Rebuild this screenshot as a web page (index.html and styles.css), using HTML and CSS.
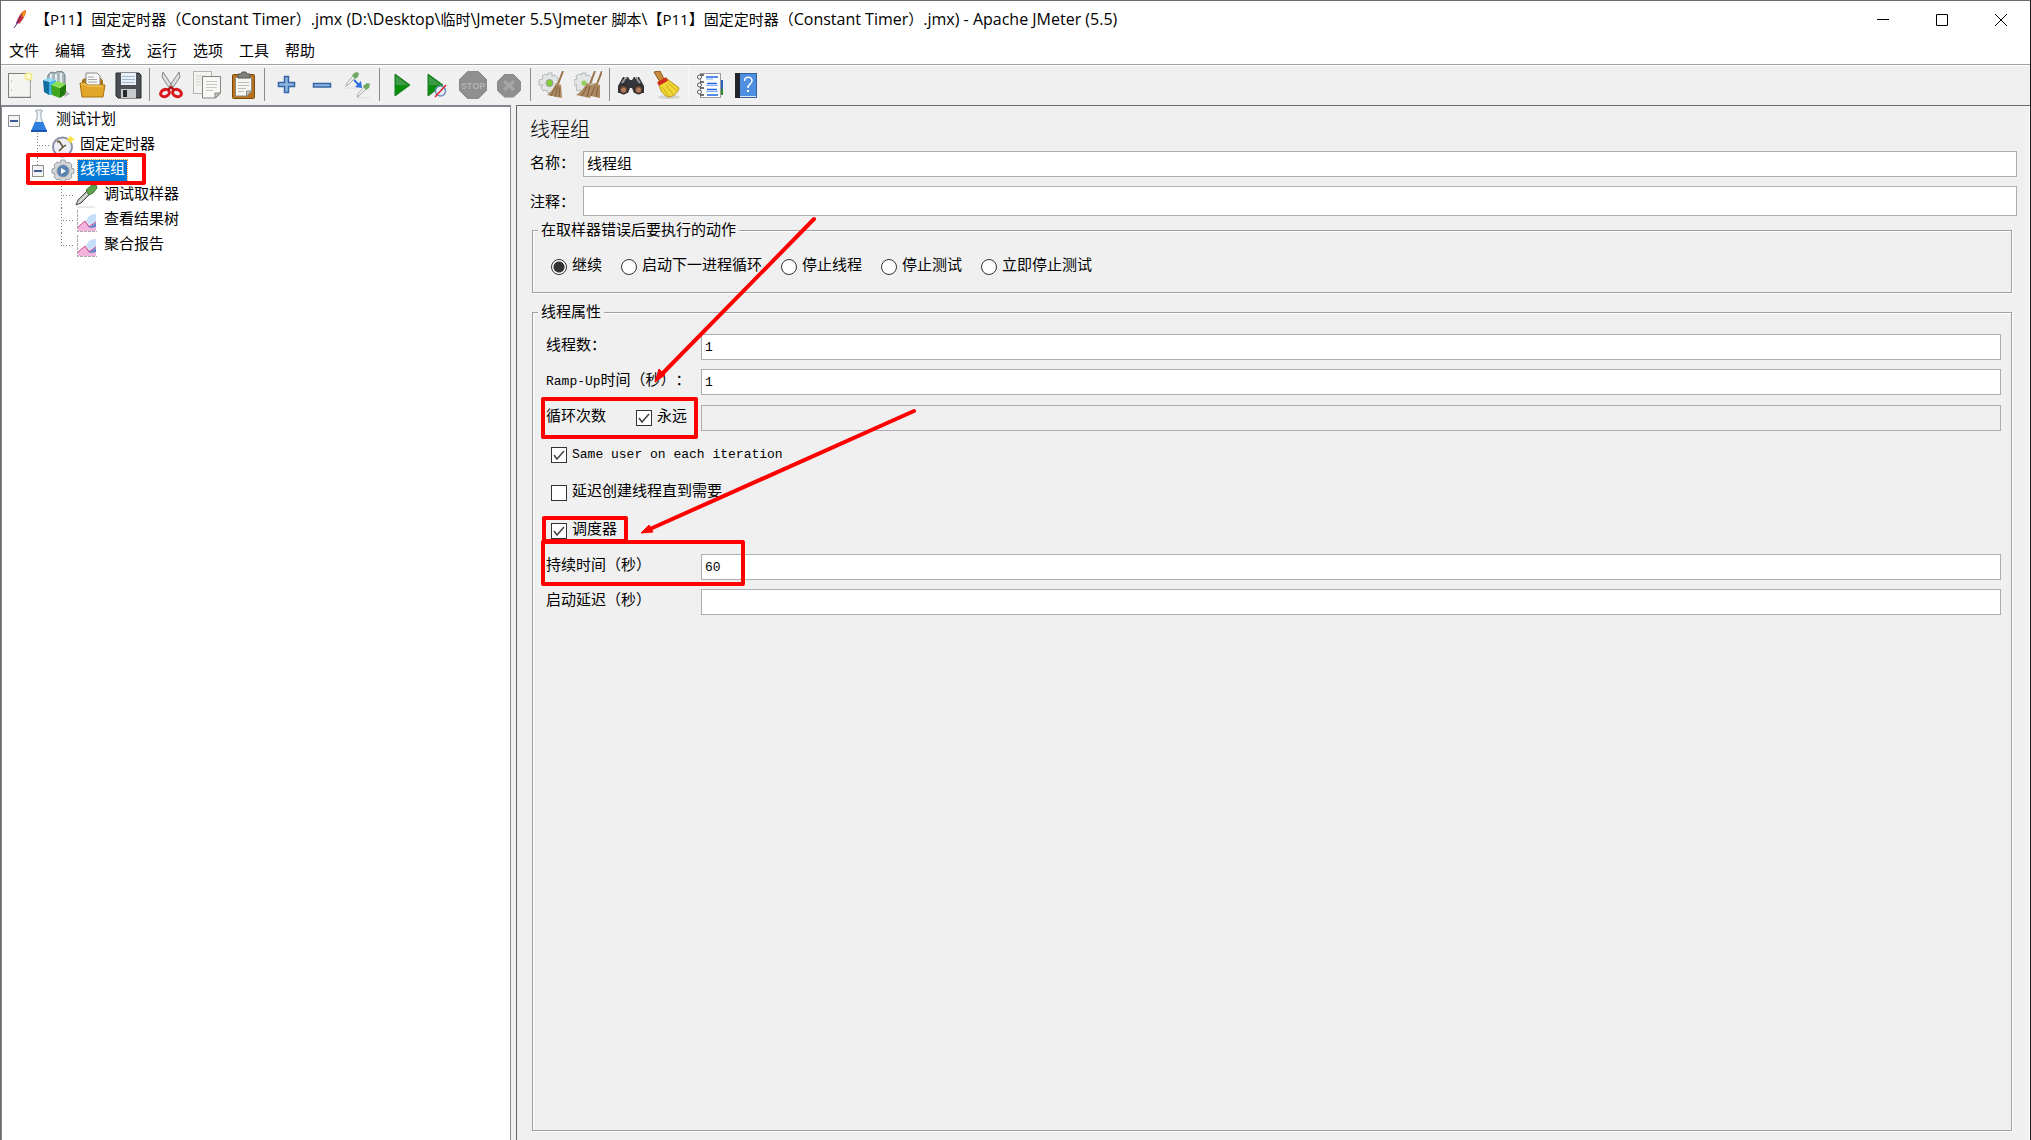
FILE: index.html
```html
<!DOCTYPE html>
<html lang="zh-CN">
<head>
<meta charset="utf-8">
<title>Apache JMeter (5.5)</title>
<link rel="stylesheet" href="styles.css">
</head>
<body>
<div class="window">
  <header class="titlebar">
    <svg class="app-icon" viewBox="0 0 14 20" aria-hidden="true">
      <path d="M13 1C9 2 6 6 4 12l2 3c4-4 6-8 7-14z" fill="#d22b3a"/>
      <path d="M13 1C10 2 8 4 7 7l4 1c1-2 2-4 2-7z" fill="#f28a1c"/>
      <path d="M4 11l-1 4 3-1z" fill="#8c2a86"/>
      <path d="M1 19l4-6M9 5l-5 9" stroke="#5b2a6e" stroke-width="1" fill="none"/>
    </svg>
    <h1 class="title">【P11】固定定时器（<span>Constant Timer</span>）<span>.jmx (D:\Desktop\</span>临时<span>\Jmeter 5.5\Jmeter </span>脚本<span>\</span>【P11】固定定时器（<span>Constant Timer</span>）<span>.jmx) - Apache JMeter (5.5)</span></h1>
    <div class="window-controls">
      <button type="button" aria-label="最小化"><svg viewBox="0 0 12 12"><path d="M0 5.500h12" stroke="#000" fill="none"/></svg></button>
      <button type="button" aria-label="最大化"><svg viewBox="0 0 12 12"><path d="M.5.5h11v11H.5z" stroke="#000" fill="none"/></svg></button>
      <button type="button" aria-label="关闭"><svg viewBox="0 0 12 12"><path d="M0 0l12 12M12 0L0 12" stroke="#000" fill="none"/></svg></button>
    </div>
  </header>

  <nav class="menubar">
    <button type="button">文件</button>
    <button type="button">编辑</button>
    <button type="button">查找</button>
    <button type="button">运行</button>
    <button type="button">选项</button>
    <button type="button">工具</button>
    <button type="button">帮助</button>
  </nav>

  <div class="toolbar" role="toolbar">
    <button type="button" aria-label="新建"><svg viewBox="0 0 28 28">
      <rect x="2.500" y="2.500" width="22" height="24" fill="#f4f4f3" stroke="#7e7e78"/>
      <path d="M4 25.500h20v-15" stroke="#d8d8d4" fill="none"/><path d="M5.500 9v2M5.500 18v2" stroke="#c4c4c0"/>
      <circle cx="22.500" cy="5.500" r="4" fill="#f3ea8c"/><circle cx="22.500" cy="5.500" r="2.200" fill="#fffde0"/>
    </svg></button>
    <button type="button" aria-label="模板"><svg viewBox="0 0 28 28">
      <path d="M6 4l3-3 4 1 3-2 5 1 2 3v10H5z" fill="#a9b6bb" stroke="#6d7f86"/>
      <path d="M9 3v9M14 3v9M19 2v10" stroke="#e6edf0" stroke-width="2"/>
      <path d="M1 9l6 2v13l-5-3z" fill="#0f6f9f"/><path d="M7 11l7-2v14l-7 1z" fill="#3fb4e4"/><path d="M1 9l6-2 7 2-7 2z" fill="#8ed6f3"/>
      <path d="M9 14l9 3v10l-8-3z" fill="#3ea51c"/><path d="M18 17l6-4v10l-6 4z" fill="#1f7a0c"/><path d="M9 14l6-4 9 3-6 4z" fill="#8be055"/>
      <path d="M24 20l4 3-6 3z" fill="#b5b5b5"/>
    </svg></button>
    <button type="button" aria-label="打开"><svg viewBox="0 0 28 28">
      <path d="M4 9l3-2h16l2 3v14H4z" fill="#a87410"/>
      <path d="M8 2h11l3 3v11H8z" fill="#f7f7f7" stroke="#8a8a8a"/><path d="M10 6h6M10 8.500h9M10 11h9" stroke="#a5a5a5"/>
      <path d="M2 12h6l2 2h17l-2 12H4z" fill="#e2a62a" stroke="#a8740f"/><path d="M3 13h5l2 2h15" stroke="#f8d878" fill="none"/>
    </svg></button>
    <button type="button" aria-label="保存"><svg viewBox="0 0 28 28">
      <path d="M2 2h23l2 2v23H4l-2-2z" fill="#4b4e53" stroke="#26282b"/>
      <rect x="7" y="2" width="15" height="12" fill="#e8eff6"/><path d="M8 5.500h13M8 8.500h13M8 11.500h13" stroke="#9db8cf"/>
      <rect x="7" y="18" width="15" height="9" fill="#c7c9cb"/><rect x="9" y="19" width="4" height="7" fill="#26282b"/>
    </svg></button>
    <span class="separator"></span>
    <button type="button" aria-label="剪切"><svg viewBox="0 0 28 28">
      <path d="M6 1l-1 5 8 12 3-2zM22 1l1 5-8 12-3-2z" fill="#dcdedf" stroke="#85888a"/>
      <ellipse cx="8" cy="22" rx="4.500" ry="3.500" fill="none" stroke="#d8161c" stroke-width="3" transform="rotate(-25 8 22)"/>
      <ellipse cx="20" cy="22" rx="4.500" ry="3.500" fill="none" stroke="#d8161c" stroke-width="3" transform="rotate(25 20 22)"/>
      <path d="M11 19l3-3 3 3" stroke="#b50d12" stroke-width="2" fill="none"/>
    </svg></button>
    <button type="button" aria-label="复制"><svg viewBox="0 0 28 28">
      <rect x=".5" y=".5" width="18" height="22" fill="#f3f3f2" stroke="#b4b4b0"/><path d="M3 5h10M3 8h5M3 11h5M3 14h5" stroke="#d0d0cc"/>
      <path d="M9.500 5.500h18V22l-5 5h-13z" fill="#f8f8f7" stroke="#858580"/><path d="M22 27v-5h5.500z" fill="#c5c5c0" stroke="#858580"/>
      <path d="M13 10.500h11M13 13.500h11M13 16.500h11M13 19.500h7" stroke="#c4c4c0"/>
    </svg></button>
    <button type="button" aria-label="粘贴"><svg viewBox="0 0 28 28">
      <rect x="3.500" y="3.500" width="22" height="24" rx="1" fill="#b8741c" stroke="#7d4a0a"/>
      <path d="M6.500 6.500h16V20l-5 5h-11z" fill="#f6f6f5" stroke="#8a8a86"/><path d="M17.500 25v-5h5z" fill="#c9c9c5" stroke="#8a8a86"/>
      <path d="M9 11.500h11M9 14.500h11M9 17.500h8M9 20.500h6" stroke="#bcbcb8"/>
      <path d="M9 3h3l1-2h4l1 2h3v4H9z" fill="#7e807c" stroke="#54564f"/>
    </svg></button>
    <span class="separator"></span>
    <button type="button" aria-label="展开"><svg viewBox="0 0 28 28">
      <path d="M12.500 5.500h4v6h6v4h-6v6h-4v-6h-6v-4h6z" fill="#8db6e2" stroke="#3465a4" stroke-width="1.500"/>
    </svg></button>
    <button type="button" aria-label="折叠"><svg viewBox="0 0 28 28"><rect x="5.500" y="12.500" width="17" height="3.500" fill="#8db6e2" stroke="#3465a4" stroke-width="1.500"/></svg></button>
    <button type="button" aria-label="切换"><svg viewBox="0 0 28 28">
      <path d="M2 15l1-3 6-7 2 2-7 7z" fill="#f2f4f2" stroke="#a5aaa5"/><path d="M8 4l4-3 3 1-1 4-3 2z" fill="#6fa860"/>
      <path d="M0 17h14M13 27h13" stroke="#dddddd"/>
      <path d="M13 26l1-3 6-7 2 2-7 7z" fill="#f2f4f2" stroke="#a5aaa5"/><path d="M19 15l4-3 3 1-1 4-3 2z" fill="#6fa860"/>
      <path d="M10 9l5 5" stroke="#2d6fe0" stroke-width="2"/><path d="M18 17l-7-1 6-6z" fill="#2d6fe0"/>
    </svg></button>
    <span class="separator"></span>
    <button type="button" aria-label="启动"><svg viewBox="0 0 28 28"><path d="M8 3l15 11L8 25z" fill="#0a8f0a" stroke="#1c7a2a"/><path d="M9 5l12 9H9z" fill="#3f9a4a"/></svg></button>
    <button type="button" aria-label="不停顿开始"><svg viewBox="0 0 28 28"><path d="M5 3l15 11L5 25z" fill="#0a8f0a" stroke="#1c7a2a"/><path d="M6 5l12 9H6z" fill="#3f9a4a"/>
      <circle cx="17.500" cy="20" r="5" fill="#e8eef7" stroke="#6f8fc0" stroke-width="1.500"/><path d="M12 26l11-12" stroke="#d8232a" stroke-width="1.500"/>
    </svg></button>
    <button type="button" aria-label="停止" disabled><svg viewBox="0 0 28 28"><path d="M8.500.5h11l8 8v11l-8 8h-11l-8-8v-11z" fill="#8f8f8f" stroke="#8a8a8a"/>
      <text x="14" y="18" text-anchor="middle" class="stop-text">STOP</text></svg></button>
    <button type="button" aria-label="关闭线程" disabled><svg viewBox="0 0 28 28"><path d="M9.500 3.500h9l7 7v9l-7 6.500h-9l-7-6.500v-9z" fill="#8f8f8f" stroke="#8a8a8a"/><path d="M9 10l10 9M19 10L9 19" stroke="#a6a6a6" stroke-width="3.500"/></svg></button>
    <span class="separator"></span>
    <button type="button" aria-label="清除"><svg viewBox="0 0 28 28">
      <path d="M10 2h4v3l3-1 3 3v11l-5 1-1 3h-4l-1-3-4 1-2-4 2-2H1v-5l4-1-1-3 3-2 3 1z" fill="#e2e4e5" stroke="#b5b8ba"/>
      <circle cx="11.500" cy="12" r="3.500" fill="#7fcf35" stroke="#9a9c9a"/>
      <path d="M25 0l-5 13" stroke="#9a7448" stroke-width="2"/><path d="M18 12l5 2 1 13-15-3c4-3 7-7 9-12z" fill="#ac8961"/>
      <path d="M18 15l-5 10M20 15l-3 11M22 16l-1 10" stroke="#7f603d"/>
    </svg></button>
    <button type="button" aria-label="清除全部"><svg viewBox="0 0 28 28">
      <path d="M8 2h4v3l3-1 3 3v11l-5 1-1 3H8l-1-3-4 1-1-4 1-2H0v-5l3-1-1-3 3-2 3 1z" fill="#e2e4e5" stroke="#b5b8ba"/>
      <circle cx="10" cy="12" r="2.500" fill="#8fce55"/>
      <path d="M21 0l-5 13M28 0l-5 13" stroke="#9a7448" stroke-width="2"/><path d="M13 12l4 2 4-2 5 2v13l-9-2-1 2-14-3c5-3 8-7 11-12z" fill="#ac8961"/>
      <path d="M13 15L8 25M16 15l-3 11M21 15l-4 10M24 16l-2 10" stroke="#7f603d"/>
    </svg></button>
    <span class="separator"></span>
    <button type="button" aria-label="查找"><svg viewBox="0 0 28 28">
      <path d="M6 6h5l2 3h2l2-3h5l5 9v7H17l-2-5h-2l-2 5H1v-7z" fill="#33363a"/>
      <path d="M7 7h3M18 7h3M5 12l3-4M20 8l3 4" stroke="#9a9da0" stroke-width="2"/>
      <circle cx="6.500" cy="18.500" r="4.500" fill="#5b4436" stroke="#222"/><circle cx="21.500" cy="18.500" r="4.500" fill="#5b4436" stroke="#222"/>
      <circle cx="6.500" cy="19" r="2.500" fill="#b27a56"/><circle cx="21.500" cy="19" r="2.500" fill="#b27a56"/>
    </svg></button>
    <button type="button" aria-label="重置查找"><svg viewBox="0 0 28 28">
      <ellipse cx="16" cy="26" rx="11" ry="2" fill="#d3d3d0"/>
      <path d="M1 1l6-1 4 8-4 3z" fill="#c88a3c" stroke="#8a5a1c"/>
      <path d="M6 11l7-4 13 10c-1 5-6 9-11 9-6-3-9-8-9-15z" fill="#f1d636" stroke="#b8940f"/>
      <path d="M9 16l7 9M13 14l7 9M15 12l9 8" stroke="#cda91c" fill="none"/><path d="M5 13l9-5" stroke="#d22a1c" stroke-width="4"/>
    </svg></button>
    <span class="separator separator-faint"></span>
    <button type="button" aria-label="函数助手"><svg viewBox="0 0 28 28">
      <path d="M24 9h3v9h-3z" fill="#2a63c4"/><path d="M24 18h3v6h-3z" fill="#2f8a2a"/>
      <rect x="4.500" y="2.500" width="20" height="24" fill="#fff" stroke="#9a9a98"/>
      <path d="M10 6h12M11 12.500h10M11 18.500h10M11 24h11" stroke="#1f66e0" stroke-width="1.500"/><path d="M10 8h7M10 14.500h12M10 20.500h12" stroke="#7db0f4"/>
      <path d="M4 4h4M4 11h4M4 17h4M4 24h4" stroke="#444" stroke-width="1.500"/>
      <g fill="#fff" stroke="#555"><circle cx="3.500" cy="6" r="2"/><circle cx="3.500" cy="14" r="2"/><circle cx="3.500" cy="21" r="2"/></g>
    </svg></button>
    <button type="button" aria-label="帮助"><svg viewBox="0 0 28 28">
      <rect x="3.500" y="2.500" width="21" height="24" fill="#4f8fe0" stroke="#355f9c"/><rect x="3" y="2" width="5" height="25" fill="#22262c"/>
      <path d="M8 25.500h16" stroke="#dfe7f2"/>
      <path d="M12.500 10c0-5 8-5 7.500 0-.5 3-4 3-4 7" fill="none" stroke="#fff" stroke-width="1.500"/><rect x="15" y="19" width="2" height="2" fill="#fff"/>
    </svg></button>
  </div>

  <div class="workspace">
    <aside class="tree-pane">
      <ul class="tree">
        <li>
          <div class="node"><button type="button" class="toggle" aria-label="收起 测试计划"></button>
            <svg viewBox="0 0 24 24"><path d="M9 1h6v2h-1v6l5 12H5l5-12V3H9z" fill="#e4ebf0" stroke="#a3adb5"/><path d="M8 13h8l4 9H4z" fill="#2f7fe0"/><path d="M4 21h16v2H4z" fill="#1b55ad"/><path d="M12 4v8" stroke="#fff"/></svg>
            <span class="node-label">测试计划</span></div>
          <ul>
            <li>
              <div class="node"><span class="stub"></span>
                <svg viewBox="0 0 24 24"><circle cx="11.500" cy="13" r="9.500" fill="#eef0f6" stroke="#8d90a8" stroke-width="2"/><path d="M8 7l4 6 3-2M8 7l-2 1M12 13l-4 4" stroke="#5c5030" stroke-width="1.500" fill="none"/><path d="M19 1l2 3 3 1-3 2-1 3-2-3-3-1 3-2z" fill="#f5e33a"/></svg>
                <span class="node-label">固定定时器</span></div>
            </li>
            <li>
              <div class="node"><button type="button" class="toggle" aria-label="收起 线程组"></button>
                <svg viewBox="0 0 24 24"><path d="M10 1h4l1 3 3-1 3 3-1 3 3 1v4l-3 1 1 3-3 3-3-1-1 3h-4l-1-3-3 1-3-3 1-3-3-1v-4l3-1-1-3 3-3 3 1z" fill="#d4d7da" stroke="#9b9fa4"/><circle cx="12" cy="12" r="6" fill="#5a83b4" stroke="#8d98a4"/><path d="M10 9l5 3-5 3z" fill="#fff"/></svg>
                <span class="node-label selected">线程组</span></div>
              <ul>
                <li><div class="node"><span class="stub"></span>
                  <svg viewBox="0 0 24 24"><path d="M1 21l2-5 9-9 3 3-9 9z" fill="#b9bdb9" stroke="#4b504b"/><path d="M3 19l9-9" stroke="#f4f4f4"/><path d="M11 6l3 5 4-2 4-5-1-3h-4z" fill="#5fa04c" stroke="#3f7a30"/><path d="M2 23h18" stroke="#d4d4d4"/></svg>
                  <span class="node-label">调试取样器</span></div></li>
                <li><div class="node"><span class="stub"></span>
                  <svg viewBox="0 0 24 24"><path d="M3 22v-4l7-6 4 4 4-2h3v8z" fill="#f2b3dc"/><path d="M11 12c2-5 5-7 10-7v9c-4 3-7 2-10-2z" fill="#c6def8"/><path d="M3 18l7-6 4 6 7-5" stroke="#c84a88" fill="none"/><path d="M12 14l3 4 6-4v4l-6 1z" fill="#5d86c8"/><path d="M2.500 1v21.500H22" stroke="#a6a6a6" stroke-dasharray="3 1" fill="none"/></svg>
                  <span class="node-label">查看结果树</span></div></li>
                <li><div class="node"><span class="stub"></span>
                  <svg viewBox="0 0 24 24"><path d="M3 22v-4l7-6 4 4 4-2h3v8z" fill="#f2b3dc"/><path d="M11 12c2-5 5-7 10-7v9c-4 3-7 2-10-2z" fill="#c6def8"/><path d="M3 18l7-6 4 6 7-5" stroke="#c84a88" fill="none"/><path d="M12 14l3 4 6-4v4l-6 1z" fill="#5d86c8"/><path d="M2.500 1v21.500H22" stroke="#a6a6a6" stroke-dasharray="3 1" fill="none"/></svg>
                  <span class="node-label">聚合报告</span></div></li>
              </ul>
            </li>
          </ul>
        </li>
      </ul>
    </aside>

    <main class="editor">
      <h2>线程组</h2>
      <div class="field name-row"><label for="name">名称：</label><input type="text" id="name" value="线程组"></div>
      <div class="field comment-row"><label for="comment">注释：</label><input type="text" id="comment"></div>

      <fieldset class="error-action">
        <legend>在取样器错误后要执行的动作</legend>
        <div class="radios">
          <label><input type="radio" name="action" checked>继续</label>
          <label><input type="radio" name="action">启动下一进程循环</label>
          <label><input type="radio" name="action">停止线程</label>
          <label><input type="radio" name="action">停止测试</label>
          <label><input type="radio" name="action">立即停止测试</label>
        </div>
      </fieldset>

      <fieldset class="properties">
        <legend>线程属性</legend>
        <div class="rows">
          <div class="prop"><label for="threads">线程数：</label><input type="text" id="threads" value="1"></div>
          <div class="prop"><label for="ramp"><span class="latin">Ramp-Up</span>时间（秒）：</label><input type="text" id="ramp" value="1"></div>
          <div class="prop"><div class="loop"><label for="loops">循环次数</label><label><input type="checkbox" checked>永远</label></div><input type="text" id="loops" disabled></div>
        </div>
        <div class="checks">
          <label><input type="checkbox" checked><span class="latin">Same user on each iteration</span></label>
          <label><input type="checkbox">延迟创建线程直到需要</label>
          <label><input type="checkbox" checked>调度器</label>
        </div>
        <div class="rows">
          <div class="prop"><label for="duration">持续时间（秒）</label><input type="text" id="duration" value="60"></div>
          <div class="prop"><label for="delay">启动延迟（秒）</label><input type="text" id="delay"></div>
        </div>
      </fieldset>
    </main>
  </div>

  <svg class="annotations" aria-hidden="true">
    <g fill="none" stroke="#fe0000" stroke-width="4" stroke-linejoin="round" stroke-linecap="round">
      <rect x="28" y="155" width="116" height="28"/>
      <rect x="543" y="399" width="153" height="38"/>
      <rect x="544" y="518" width="82" height="23"/>
      <rect x="543" y="542" width="200" height="42"/>
      <path d="M814 219L662 374M914 411L650 529"/>
    </g>
    <path d="M655 382l4-13 6 6zM641 533l8-8 4 7z" fill="#fe0000" stroke="#fe0000" stroke-linejoin="round"/>
  </svg>
</div>
</body>
</html>
```
FILE: styles.css
```css
* {
  box-sizing: border-box;
}

body {
  margin: 0;
  background: #f0f0f0;
  color: #000;
  font: 15px/20px "Liberation Mono", "Noto Sans CJK SC", monospace;
  text-spacing-trim: space-all;
}

button {
  padding: 0;
  border: 0;
  background: none;
  color: inherit;
  font: inherit;
}

.window {
  position: relative;
  display: flex;
  flex-direction: column;
  min-height: 100vh;
  border: solid #6b6b6e;
  border-width: 1px 1px 0 1px;
  border-right-color: #1a1a1c;
}

/* Title bar and menu */
.titlebar {
  display: flex;
  align-items: center;
  height: 37px;
  padding-left: 12px;
  background: #fff;
}

.app-icon {
  width: 14px;
  height: 20px;
  margin: 0 8px 2px 0;
}

.title {
  flex: 1;
  margin: 0;
  padding-bottom: 2px;
  font: 15px/20px "Open Sans", "Noto Sans CJK SC", sans-serif;
  white-space: nowrap;
}

.title span {
  font-size: 16px;
}

.window-controls {
  display: flex;
}

.window-controls button {
  display: grid;
  place-items: center;
  width: 59px;
  height: 36px;
}

.window-controls svg {
  width: 12px;
  height: 12px;
}

.menubar {
  display: flex;
  height: 27px;
  padding-bottom: 3px;
  background: #fff;
  border-bottom: 1px solid #a0a0a0;
}

.menubar button {
  padding: 0 8px;
  font: 15px/20px "Noto Sans", "Noto Sans CJK SC", sans-serif;
}

/* Toolbar */
.toolbar {
  display: flex;
  align-items: center;
  height: 40px;
  padding: 0 0 2px 1px;
  border-top: 1px solid #fff;
}

.toolbar button {
  display: grid;
  place-items: center;
  width: 36px;
  height: 36px;
}

.toolbar svg {
  width: 28px;
  height: 28px;
}

.separator {
  width: 1px;
  height: 33px;
  margin: 0 3px;
  background: #8c8c8c;
}

.separator-faint {
  background: #f8f8f8;
}

.stop-text {
  font: bold 9px "Liberation Sans", sans-serif;
  fill: #b4b4b4;
}

/* Panes */
.workspace {
  flex: 1;
  display: flex;
}

.tree-pane {
  width: 510px;
  margin-right: 5px;
  padding: 1px 0 0 1px;
  border: solid #828790;
  border-width: 2px 1px 0 1px;
  background: #fff;
}

.tree,
.tree ul {
  margin: 0;
  padding: 0;
  list-style: none;
}

.tree ul {
  padding-left: 24px;
}

.tree ul li {
  background: repeating-linear-gradient(#808080 0 1px, transparent 1px 3px) 10px 0 / 1px 100% no-repeat;
}

.tree ul li:last-child {
  background-size: 1px 13px;
}

.node {
  display: flex;
  align-items: center;
  height: 25px;
}

.node svg {
  width: 24px;
  height: 24px;
}

.toggle {
  width: 12px;
  height: 12px;
  margin: 0 7px 0 5px;
  border: 1px solid #919191;
  background: linear-gradient(#3c5a9a, #3c5a9a) center / 8px 2px no-repeat #f4f4f4;
}

.stub {
  width: 12px;
  height: 1px;
  margin-left: 12px;
  background: repeating-linear-gradient(90deg, #808080 0 1px, transparent 1px 3px);
}

.node-label {
  margin-left: 3px;
  padding: 0 2px;
  line-height: 22px;
}

.selected {
  outline: 1px dotted #ff8728;
  background: #0078d7;
  color: #fff;
}

.editor {
  flex: 1;
  display: flex;
  flex-direction: column;
  padding: 9px 13px;
  border: solid #696969;
  border-width: 1px 0 0 1px;
  box-shadow: inset -1px 0 #fff;
}

h2 {
  margin: 0 0 8px;
  font: 20px/28px "Noto Sans CJK SC", sans-serif;
  font-weight: 300;
}

/* Form controls */
input {
  margin: 0;
  font: 15px/20px "Liberation Mono", "Noto Sans CJK SC", monospace;
}

input[type="text"] {
  min-width: 0;
  height: 26px;
  padding: 0 3px;
  border: 1px solid #abadb3;
  border-radius: 0;
  background: #fff;
  color: #000;
}

input[type="text"]:disabled {
  background: #f0f0f0;
}

.properties input,
.latin {
  font-size: 13px;
}

#name {
  padding-bottom: 2px;
}

input[type="checkbox"],
input[type="radio"] {
  appearance: none;
  width: 16px;
  height: 16px;
  border: 1px solid #333;
  background: #fff;
}

input[type="checkbox"]:checked {
  background: #fff url("data:image/svg+xml,%3Csvg xmlns='http://www.w3.org/2000/svg' viewBox='0 0 14 14'%3E%3Cpath d='M2 7l3 4 7-8' fill='none' stroke='%23444' stroke-width='1.500'/%3E%3C/svg%3E");
}

input[type="radio"] {
  border-radius: 50%;
}

input[type="radio"]:checked {
  background: radial-gradient(circle, #333 0 5px, #fff 6px);
}

.field {
  display: grid;
  grid-template-columns: 53px 1fr;
  align-items: center;
}

.name-row {
  margin-bottom: 9px;
}

.name-row label {
  padding-top: 2px;
}

.comment-row label {
  padding-top: 6px;
}

.comment-row input {
  height: 30px;
}

fieldset {
  min-width: 0;
  margin: 0 5px 0 2px;
  border: 1px solid #a0a0a0;
  box-shadow: 1px 1px #fff, inset 1px 1px #fff;
}

legend {
  height: 18px;
  padding: 0 3px;
  background: #f0f0f0;
  line-height: 22px;
}

.error-action {
  margin-top: 5px;
  padding: 15px 5px 12px;
}

.properties {
  flex: 1;
  margin-top: 10px;
  padding: 13px 10px 0 5px;
}

.radios {
  display: flex;
  gap: 19px;
  height: 26px;
  padding-left: 13px;
}

.radios label,
.checks label,
.loop label {
  display: flex;
  align-items: center;
  gap: 5px;
}

.rows {
  display: grid;
  gap: 9px;
  padding-left: 8px;
}

.prop {
  display: grid;
  grid-template-columns: 155px 1fr;
  align-items: center;
}

.prop:nth-child(3) {
  margin-top: 1px;
}

.prop > label {
  white-space: nowrap;
}

.loop {
  display: flex;
  gap: 30px;
}

.checks {
  padding: 5px 13px 4px;
}

.checks label {
  height: 38px;
}

/* Red marks drawn over the whole window */
.annotations {
  position: absolute;
  top: -1px;
  left: -1px;
  width: 100%;
  height: 100%;
  pointer-events: none;
}
```
